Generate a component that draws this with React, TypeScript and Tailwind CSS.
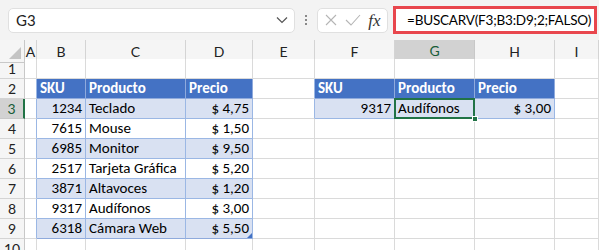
import React from 'react';

const cellFont = { fontFamily: 'Carlito, Calibri, Lato, "Liberation Sans", sans-serif' };
const uiFont = { fontFamily: 'Lato, "Noto Sans", sans-serif' };

type Row = {
  n: number;
  b?: string;
  c?: string;
  d?: string;
  f?: string;
  g?: string;
  h?: string;
  head?: boolean;
  band?: boolean;
  table2?: 'head' | 'band';
};

const rows: Row[] = [
  { n: 1 },
  { n: 2, b: 'SKU', c: 'Producto', d: 'Precio', f: 'SKU', g: 'Producto', h: 'Precio', head: true, table2: 'head' },
  { n: 3, b: '1234', c: 'Teclado', d: '$ 4,75', f: '9317', g: 'Audífonos', h: '$ 3,00', band: true, table2: 'band' },
  { n: 4, b: '7615', c: 'Mouse', d: '$ 1,50' },
  { n: 5, b: '6985', c: 'Monitor', d: '$ 9,50', band: true },
  { n: 6, b: '2517', c: 'Tarjeta Gráfica', d: '$ 5,20' },
  { n: 7, b: '3871', c: 'Altavoces', d: '$ 1,20', band: true },
  { n: 8, b: '9317', c: 'Audífonos', d: '$ 3,00' },
  { n: 9, b: '6318', c: 'Cámara Web', d: '$ 5,50', band: true },
  { n: 10 },
];

const cols = ['A', 'B', 'C', 'D', 'E', 'F', 'G', 'H', 'I'];
const grid = 'grid grid-cols-[25px_12px_49px_100px_67px_62px_80px_80px_80px_44px]';

function tableCell(text: string | undefined, head: boolean, band: boolean, right: boolean, last: boolean) {
  const bg = head ? 'bg-[#4472c4] text-white font-bold' : band ? 'bg-[#d9e1f2] text-black' : 'bg-white text-black';
  const border = head ? 'border-r border-b border-r-[#8faadc] border-b-[#8faadc]' : 'border-r border-b border-[#9bb7e4]';
  return (
    <div className={`h-5 flex items-center px-[3px] overflow-hidden whitespace-nowrap ${bg} ${border} ${right && !head ? 'justify-end' : 'justify-start'} ${last ? 'border-b-[#8faadc]' : ''}`}>
      {text}
    </div>
  );
}

function Plain({ blueRight }: { blueRight?: boolean }) {
  return <div className={`h-5 bg-white border-r border-b border-b-[#dadada] ${blueRight ? 'border-r-[#9bb7e4]' : 'border-r-[#dadada]'}`} />;
}

export default function App() {
  return (
    <div className="w-[599px] h-[250px] overflow-hidden bg-white select-none" style={cellFont}>
      {/* formula bar */}
      <div className="h-10 bg-[#f3f3f3] flex items-center pl-2" style={uiFont}>
        <div className="w-[287px] h-[25px] bg-white border border-[#e0e0e0] rounded-[5px] flex items-center justify-between pl-[7px] pr-[6px]">
          <span className="text-[15px] text-[#222]">G3</span>
          <svg width="12" height="8" viewBox="0 0 12 8" fill="none" stroke="#555" strokeWidth="1.2">
            <path d="M1 1.5 L6 6.5 L11 1.5" />
          </svg>
        </div>
        <div className="w-[22px] flex flex-col items-center gap-[2px]">
          <span className="w-[2px] h-[2px] bg-[#888]" />
          <span className="w-[2px] h-[2px] bg-[#888]" />
          <span className="w-[2px] h-[2px] bg-[#888]" />
        </div>
        <div className="w-[71px] h-[25px] bg-white border border-[#e0e0e0] rounded-[5px] flex items-center justify-around px-[3px]">
          <svg width="14" height="14" viewBox="0 0 14 14" stroke="#b5b5b5" strokeWidth="1.1" fill="none">
            <path d="M2 2 L12 12 M12 2 L2 12" />
          </svg>
          <svg width="16" height="14" viewBox="0 0 16 14" stroke="#b5b5b5" strokeWidth="1.1" fill="none">
            <path d="M1 7 L6 12 L15 2" />
          </svg>
          <span className="text-[17px] italic text-[#333] leading-none" style={{ fontFamily: '"Liberation Serif", serif' }}>fx</span>
        </div>
        <div className="ml-[5px] w-[204px] h-[28px] border-[3px] border-[#e8464d] bg-white flex items-center pl-[11px] overflow-hidden">
          <span className="text-[13.5px] tracking-[-0.2px] text-black whitespace-nowrap">=BUSCARV(F3;B3:D9;2;FALSO)</span>
        </div>
      </div>

      {/* column headers */}
      <div className={`${grid} h-[19px] bg-[#f5f5f5] text-[14px] text-[#222]`} style={uiFont}>
        <div className="relative border-r border-b border-[#c8c8c8]">
          <svg className="absolute right-[3px] bottom-[3px]" width="12" height="12" viewBox="0 0 12 12">
            <path d="M12 0 L12 12 L0 12 Z" fill="#c4c4c4" />
          </svg>
        </div>
        {cols.map((c) => (
          <div
            key={c}
            className={`flex items-center justify-center border-r border-b ${
              c === 'G' ? 'bg-[#d2d2d2] text-[#185c37] border-r-[#c8c8c8] border-b-2 border-b-[#217346]' : 'border-[#d4d4d4] border-b-[#c8c8c8]'
            }`}
          >
            {c}
          </div>
        ))}
      </div>

      {/* rows */}
      <div className="text-[15px]">
        {rows.map((r) => {
          const inTable = r.n >= 2 && r.n <= 9;
          const selected = r.n === 3;
          return (
            <div key={r.n} className={grid}>
              <div
                className={`h-5 flex items-center justify-center text-[14px] border-b ${
                  selected
                    ? 'bg-[#d2d2d2] text-[#185c37] border-b-[#c8c8c8] border-r-2 border-r-[#217346]'
                    : 'bg-[#f5f5f5] text-[#222] border-r border-[#d4d4d4] border-r-[#c8c8c8]'
                }`}
                style={uiFont}
              >
                {r.n}
              </div>
              <Plain blueRight={inTable} />
              {inTable ? tableCell(r.b, !!r.head, !!r.band, true, r.n === 9) : <Plain />}
              {inTable ? tableCell(r.c, !!r.head, !!r.band, false, r.n === 9) : <Plain />}
              {inTable ? (
                <div className="relative">
                  {tableCell(r.d, !!r.head, !!r.band, true, r.n === 9)}
                  {r.n === 9 && (
                    <svg className="absolute right-[1px] bottom-[1px]" width="5" height="5" viewBox="0 0 5 5">
                      <path d="M5 0 L5 5 L0 5 Z" fill="#4472c4" />
                    </svg>
                  )}
                </div>
              ) : (
                <Plain />
              )}
              <Plain blueRight={!!r.table2} />
              {r.table2 ? tableCell(r.f, r.table2 === 'head', r.table2 === 'band', true, false) : <Plain />}
              {r.table2 ? (
                <div className="relative">
                  {tableCell(r.g, r.table2 === 'head', r.table2 === 'band', false, false)}
                  {selected && (
                    <>
                      <div className="absolute -top-[1px] -left-[1px] right-0 bottom-0 border-2 border-[#217346] pointer-events-none" />
                      <div className="absolute -right-[3px] -bottom-[3px] w-[6px] h-[6px] bg-[#217346] border border-white" />
                    </>
                  )}
                </div>
              ) : (
                <Plain />
              )}
              {r.table2 ? tableCell(r.h, r.table2 === 'head', r.table2 === 'band', true, false) : <Plain />}
              <Plain />
            </div>
          );
        })}
      </div>
    </div>
  );
}
